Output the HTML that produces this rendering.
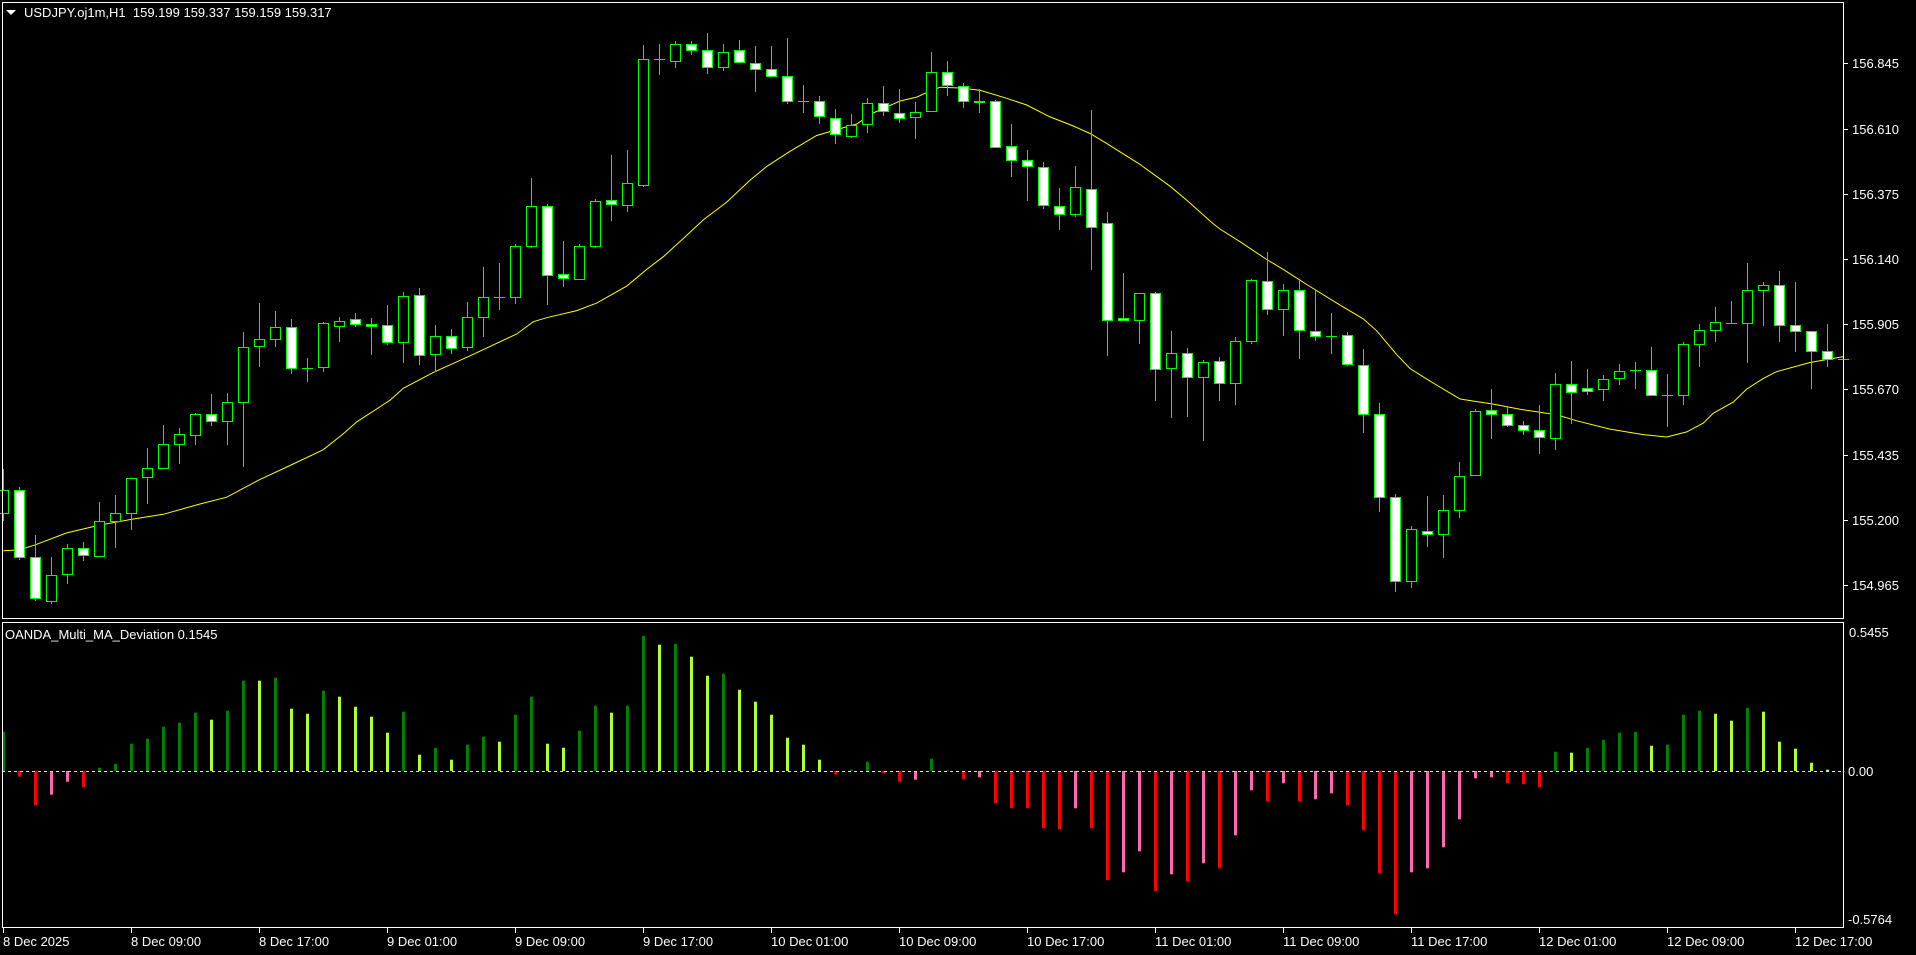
<!DOCTYPE html>
<html><head><meta charset="utf-8">
<style>
html,body{margin:0;padding:0;background:#000;width:1916px;height:955px;overflow:hidden}
svg{display:block}
text{font-family:"Liberation Sans",sans-serif;font-size:13px;fill:#fff}
.pre{white-space:pre}
</style></head>
<body>
<svg id="s" width="1916" height="955" xmlns="http://www.w3.org/2000/svg">
<rect x="0" y="0" width="1916" height="955" fill="#000"/>
<g id="ma"></g>
<g id="candles"></g>
<g id="hist"></g>
<line x1="2" y1="771.5" x2="1844" y2="771.5" stroke="#ddd" stroke-width="1" stroke-dasharray="3,3"/>
<rect x="2.5" y="2.5" width="1841" height="616" fill="none" stroke="#fff" stroke-width="1"/>
<rect x="2.5" y="622.5" width="1841" height="305" fill="none" stroke="#fff" stroke-width="1"/>
<polygon points="6,10 16,10 11,15" fill="#fff"/>
<text x="24" y="17" class="pre" xml:space="preserve">USDJPY.oj1m,H1  159.199 159.337 159.159 159.317</text>
<text x="5" y="639">OANDA_Multi_MA_Deviation 0.1545</text>
<g stroke="#fff" stroke-width="1">
<line x1="1844" y1="63.5" x2="1848" y2="63.5"/>
<line x1="1844" y1="129.5" x2="1848" y2="129.5"/>
<line x1="1844" y1="194.5" x2="1848" y2="194.5"/>
<line x1="1844" y1="259.5" x2="1848" y2="259.5"/>
<line x1="1844" y1="324.5" x2="1848" y2="324.5"/>
<line x1="1844" y1="389.5" x2="1848" y2="389.5"/>
<line x1="1844" y1="455.5" x2="1848" y2="455.5"/>
<line x1="1844" y1="520.5" x2="1848" y2="520.5"/>
<line x1="1844" y1="585.5" x2="1848" y2="585.5"/>
</g>
<g>
<text x="1852" y="68">156.845</text>
<text x="1852" y="134">156.610</text>
<text x="1852" y="199">156.375</text>
<text x="1852" y="264">156.140</text>
<text x="1852" y="329">155.905</text>
<text x="1852" y="394">155.670</text>
<text x="1852" y="460">155.435</text>
<text x="1852" y="525">155.200</text>
<text x="1852" y="590">154.965</text>
<text x="1849" y="637">0.5455</text>
<text x="1848" y="776">0.00</text>
<text x="1848" y="924">-0.5764</text>
</g>
<g id="tticks" stroke="#fff" stroke-width="1"></g>
<g>
<text x="3" y="946">8 Dec 2025</text>
<text x="131" y="946">8 Dec 09:00</text>
<text x="259" y="946">8 Dec 17:00</text>
<text x="387" y="946">9 Dec 01:00</text>
<text x="515" y="946">9 Dec 09:00</text>
<text x="643" y="946">9 Dec 17:00</text>
<text x="771" y="946">10 Dec 01:00</text>
<text x="899" y="946">10 Dec 09:00</text>
<text x="1027" y="946">10 Dec 17:00</text>
<text x="1155" y="946">11 Dec 01:00</text>
<text x="1283" y="946">11 Dec 09:00</text>
<text x="1411" y="946">11 Dec 17:00</text>
<text x="1539" y="946">12 Dec 01:00</text>
<text x="1667" y="946">12 Dec 09:00</text>
<text x="1795" y="946">12 Dec 17:00</text>
</g>
</svg>
<script>
var NS="http://www.w3.org/2000/svg";
function el(t,a,p){var e=document.createElementNS(NS,t);for(var k in a)e.setAttribute(k,a[k]);p.appendChild(e);return e;}
var tt=document.getElementById('tticks');
for(var k=0;k<15;k++){var x=3+128*k+0.5;el('line',{x1:x,y1:928,x2:x,y2:933},tt);}
var C=[
['B',1238,1295,1185,1315],['W',1238,1405,1228,1413],['W',1405,1510,1350,1517],['B',1452,1516,1407,1524],
['B',1384,1450,1373,1473],['W',1382,1402,1368,1415],['B',1314,1403,1268,1405],['B',1296,1314,1250,1382],
['B',1207,1296,1207,1337],['B',1180,1205,1130,1271],['B',1121,1180,1072,1180],['B',1096,1121,1080,1170],
['B',1045,1098,1042,1124],['W',1045,1063,994,1075],['B',1015,1063,992,1124],['B',876,1015,837,1178],
['B',856,874,765,927],['B',825,856,785,877],['W',825,929,804,944],['D',930,930,903,963],
['B',815,927,812,940],['B',810,822,800,862],['W',805,818,790,826],['W',818,822,802,897],
['W',821,863,769,870],['B',747,863,737,915],['W',745,896,728,920],['B',848,894,820,940],
['W',848,878,830,893],['B',800,876,761,886],
['B',750,800,675,850],['D',750,750,663,783],['B',621,750,616,768],['B',519,621,450,626],
['W',519,693,516,770],['W',691,701,609,725],['B',621,705,616,707],['B',507,621,503,625],
['W',505,514,392,558],['B',461,517,379,535],['B',148,468,114,472],['D',149,149,110,189],
['B',112,153,104,171],['W',112,127,104,138],['W',127,170,83,186],['B',130,170,110,180],
['W',127,157,101,158],['W',160,173,116,232],['W',173,193,116,193],['W',191,254,96,262],
['D',255,255,215,285],['W',256,294,243,313],['W',297,339,276,363],['B',315,343,287,348],
['B',259,314,248,335],['W',259,280,217,292],['W',284,298,225,310],['B',282,296,258,352],
['B',181,280,132,280],['W',181,215,155,242],
['W',216,256,210,272],['W',254,258,224,285],['W',254,370,252,370],['W',368,405,314,447],
['W',405,418,379,507],['W',421,517,410,528],['W',519,539,475,581],['B',471,539,420,548],
['W',477,572,278,682],['W',563,807,536,899],['W',803,807,690,811],['B',739,807,739,869],
['W',739,931,736,1013],['B',891,929,835,1055],['W',891,951,878,1053],['B',914,951,908,1113],
['W',911,967,900,1011],['B',860,967,850,1022],['B',707,860,703,869],['W',709,779,637,796],
['B',732,779,716,849],['W',732,832,706,907],['W',836,848,732,861],['D',848,848,789,893],
['W',846,919,837,925],['W',922,1045,880,1092],['W',1045,1255,1017,1293],['W',1255,1467,1247,1495],
['B',1335,1467,1328,1485],
['W',1341,1349,1252,1380],['B',1288,1349,1249,1408],['B',1202,1288,1166,1307],['B',1038,1199,1032,1200],
['W',1035,1045,981,1109],['W',1045,1073,1025,1079],['W',1073,1085,1062,1099],['W',1086,1104,1022,1147],
['B',969,1106,942,1135],['W',970,990,912,1071],['W',980,987,931,998],['B',957,982,946,1013],
['B',937,954,918,973],['D',935,935,913,983],['W',934,997,875,1000],['D',997,997,943,1079],
['B',868,997,862,1023],['B',833,868,817,927],['B',813,833,775,862],['D',814,814,759,818],
['B',732,815,663,915],['B',719,732,711,823],['W',719,820,683,864],['W',820,836,711,889],
['W',836,886,836,983],['W',886,906,819,927],['D',906,906,883,952]
];
var F=2.524,G='#00ff00',cg=document.getElementById('candles');
C.forEach(function(c,i){
 var x=3+16*i;if(x>1843)return;
 var t=Math.round(c[1]/F),b=Math.round(c[2]/F),h=Math.round(c[3]/F),l=Math.round(c[4]/F);
 el('line',{x1:x+0.5,y1:h,x2:x+0.5,y2:l,stroke:G,'stroke-width':1},cg);
 if(c[0]=='D'||b-t<1){el('line',{x1:x-5,y1:t+0.5,x2:x+6,y2:t+0.5,stroke:G,'stroke-width':1},cg);return;}
 el('rect',{x:x-4.5,y:t+0.5,width:10,height:b-t,fill:c[0]=='W'?'#fff':'#000',stroke:G,'stroke-width':1},cg);
});
var M=[[0,[[10,1390],[58,1388],[106,1375],[200,1345],[300,1325],[400,1310],[490,1298],[600,1272],[680,1255],[780,1210],[870,1175],[970,1135],[1030,1095],[1070,1065],[1170,1010],[1210,980],[1300,940]]],
[470,[[0,898],[140,843],[190,812],[230,802],[320,784],[380,765],[470,722],[530,680],[580,648],[640,602],[700,555],[770,510],[840,455],[890,420],[960,382],[1040,342],[1100,327],[1160,313],[1210,285],[1290,255],[1340,245],[1380,230]]],
[940,[[0,220],[60,222],[120,228],[200,248],[260,265],[330,295],[400,318],[450,337],[500,362],[600,415],[690,470],[740,505],[820,565],[840,578],[900,610],[980,655],[1030,680],[1100,718],[1200,770],[1270,805],[1310,835],[1370,895]]],
[1410,[[0,930],[60,962],[150,1007],[250,1020],[330,1033],[440,1047],[500,1062],[600,1083],[700,1097],[770,1103],[830,1090],[880,1068],[910,1043],[970,1015],[1010,982],[1060,955],[1100,938],[1200,915],[1300,900]]]];
var pts=[];M.forEach(function(s){s[1].forEach(function(p){pts.push((s[0]+p[0]/3).toFixed(1)+','+(p[1]/F).toFixed(1));});});
el('polyline',{points:pts.join(' '),fill:'none',stroke:'#ffff00','stroke-width':1},document.getElementById('ma'));
var H=[[330,'G'],[465,'R'],[551,'R'],[519,'P'],[480,'P'],[497,'R'],[438,'G'],[426,'G'],[366,'G'],[351,'G'],[315,'G'],[303,'G'],[273,'G'],[294,'L'],[267,'G'],[177,'G'],[177,'L'],[168,'G'],[261,'L'],[276,'L'],[207,'G'],[225,'L'],[255,'L'],[285,'L'],[333,'L'],[270,'G'],[399,'L'],[378,'G'],[414,'L'],[369,'G'],[345,'G'],[360,'L'],[279,'G'],[225,'G'],[366,'L'],[378,'L'],[327,'G'],[252,'G'],[273,'L'],[252,'G'],[42,'G'],[69,'L'],[66,'G'],[105,'L'],[162,'L'],[156,'G'],[204,'L'],[240,'L'],[279,'L'],[348,'L'],[369,'L'],[414,'L'],[458,'R'],[444,'G'],[420,'G'],[455,'R'],[480,'R'],[474,'P'],
[411,'G'],[446,'G'],[473,'R'],[467,'P'],[545,'R'],[560,'R'],[560,'R'],[620,'R'],[623,'R'],[560,'P'],[620,'R'],[776,'R'],[752,'P'],[689,'P'],[809,'R'],[758,'P'],[779,'R'],[725,'P'],[740,'R'],[641,'P'],[506,'P'],[539,'R'],[485,'P'],[539,'R'],[533,'P'],[515,'P'],[551,'R'],[626,'R'],[755,'R'],[878,'R'],[752,'P'],[740,'P'],[677,'P'],[593,'P'],[470,'P'],[467,'P'],[485,'R'],[488,'R'],[497,'R'],[390,'G'],[393,'L'],[378,'G'],[354,'G'],[333,'G'],[330,'G'],[372,'L'],[369,'G'],[279,'G'],[267,'G'],[276,'L'],[297,'L'],[258,'G'],[270,'L'],[360,'L'],[381,'L'],[423,'L'],[444,'L'],[450,'R']];
var COL={G:'#008000',L:'#adff2f',R:'#ff0000',P:'#ff69b4'},hg=document.getElementById('hist');
H.forEach(function(h,i){
 var x=3+16*i;if(x>1843)return;
 var v=(h[0]-448)/3;if(Math.abs(v)<0.5)return;
 var y=v<0?771+v:771, hh=Math.abs(v);
 el('rect',{x:x-1,y:y.toFixed(1),width:3,height:hh.toFixed(1),fill:COL[h[1]]},hg);
});
</script>
</body></html>
